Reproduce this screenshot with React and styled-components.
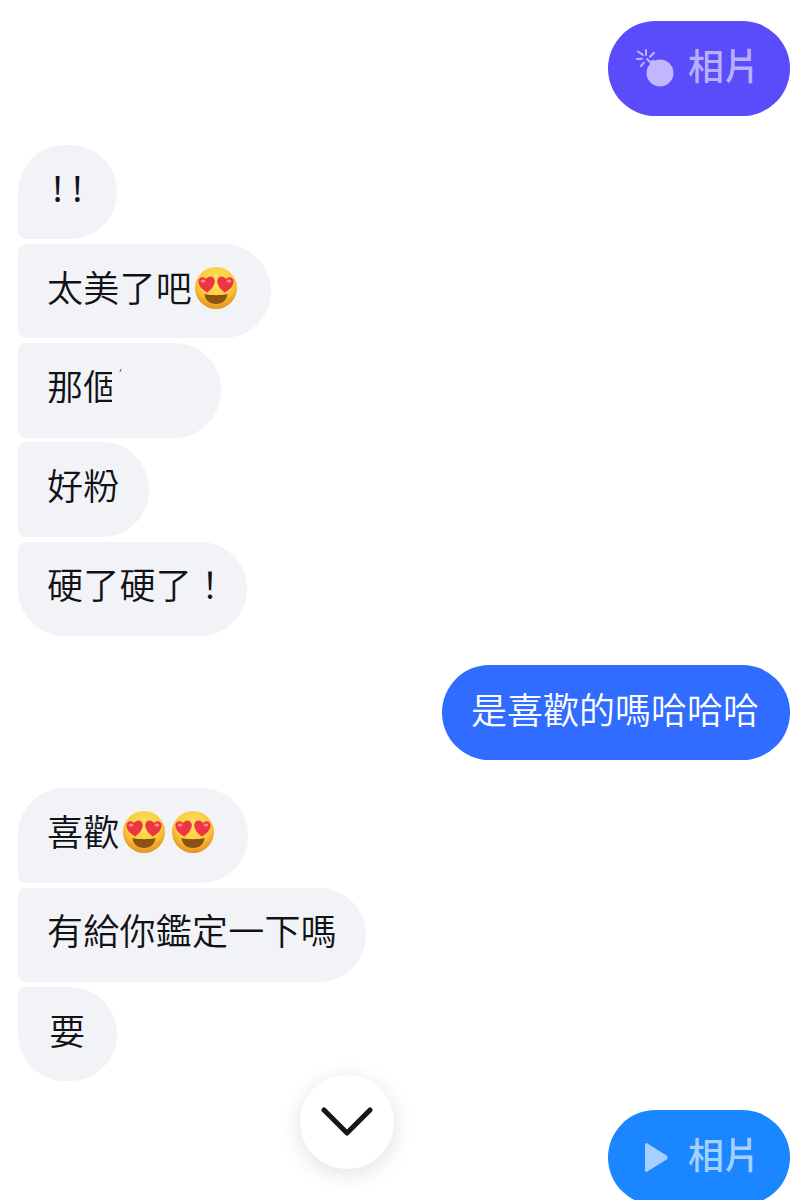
import React from "react";
import styled, { createGlobalStyle } from "styled-components";

const Global = createGlobalStyle`
  html, body { margin: 0; padding: 0; background: #fff; }
  body { font-family: "Noto Sans CJK TC", "Noto Sans", sans-serif; }
`;

const Page = styled.div`
  position: relative;
  width: 808px;
  height: 1200px;
  overflow: hidden;
  box-sizing: border-box;
  padding: 21px 18px 0;
  background: #fff;
  display: flex;
  flex-direction: column;
  gap: 28.6px;
`;

const Group = styled.div`
  flex: none;
  display: flex;
  flex-direction: column;
  align-items: flex-start;
  gap: 4.75px;
`;

const radii = {
  first: "47px 47px 47px 8px",
  middle: "8px 47px 47px 8px",
  last: "8px 47px 47px 47px",
};

const Bubble = styled.div`
  box-sizing: border-box;
  flex: none;
  height: 94.5px;
  min-width: 99px;
  padding: 0 29px 11px;
  display: flex;
  align-items: center;
  justify-content: center;
  background: #f2f3f6;
  color: #111216;
  font-size: 36px;
  font-weight: 350;
  letter-spacing: 0.25px;
  line-height: 1;
  white-space: nowrap;
  border-radius: ${(p) => radii[p.$pos]};
`;

const Outgoing = styled.div`
  box-sizing: border-box;
  align-self: flex-end;
  flex: none;
  height: 95px;
  padding: 0 31px 8px 29px;
  display: flex;
  align-items: center;
  background: #2f6cff;
  color: #fff;
  font-size: 36px;
  font-weight: 350;
  line-height: 1;
  white-space: nowrap;
  border-radius: 47.5px;
`;

const MediaPill = styled.div`
  box-sizing: border-box;
  align-self: flex-end;
  flex: none;
  width: 182px;
  height: 95px;
  padding: 0 0 9px 28px;
  display: flex;
  align-items: center;
  gap: 12px;
  background: ${(p) => p.$bg};
  color: ${(p) => p.$fg};
  font-size: 36px;
  font-weight: 500;
  line-height: 1;
  border-radius: 47.5px;
`;

const PillIcon = styled.svg`
  width: 40px;
  height: 40px;
  flex: none;
  margin-top: 9px;
`;

const EmojiSvg = styled.svg`
  width: 42px;
  height: 42px;
  margin: 4px 4.25px 0 3.25px;
  flex: none;
`;

const Bangs = styled.span`
  font-family: "Noto Sans", sans-serif;
  font-weight: 400;
  letter-spacing: 10px;
  margin: 5px -10px 0 0;
`;

const TightPunct = styled.span`
  margin-right: -10px;
`;

const Smudged = styled.span`
  position: relative;
  display: block;
  width: 145px;
  height: 36px;
  &::after {
    content: "";
    position: absolute;
    left: 73px;
    top: 2px;
    width: 1px;
    height: 3px;
    background: #55565a;
    transform: rotate(25deg);
  }
`;

const ClippedText = styled.span`
  display: block;
  width: 65px;
  overflow: hidden;
  white-space: nowrap;
`;

const JumpButton = styled.button`
  position: absolute;
  left: 300px;
  top: 1075px;
  width: 94px;
  height: 94px;
  padding: 0;
  border: 0;
  border-radius: 50%;
  background: #fff;
  box-shadow: 0 5px 22px rgba(0, 0, 0, 0.12);
  display: flex;
  align-items: center;
  justify-content: center;
`;

let uid = 0;
function Emoji() {
  const id = `face${uid++}`;
  return (
    <EmojiSvg viewBox="0 0 42 42">
      <defs>
        <radialGradient id={id} cx="50%" cy="34%" r="66%">
          <stop offset="0%" stopColor="#ffe566" />
          <stop offset="62%" stopColor="#fbc93c" />
          <stop offset="100%" stopColor="#e3901c" />
        </radialGradient>
      </defs>
      <circle cx="21" cy="21" r="21" fill={`url(#${id})`} />
      <path
        d="M9.5 27 C15 28.6 27 28.6 32.5 27 C32 33 27.5 37 21 37 C14.5 37 10 33 9.5 27 Z"
        fill="#8a5314"
      />
      <path
        d="M12.5 25.5 C8.5 23.5 3.6 19.5 3.4 14.5 C3.3 10.6 8 8.6 11 12 C13.6 7.8 19.4 9 19.8 13.6 C20.2 18 16 23 12.5 25.5 Z"
        fill="#ee3543"
      />
      <path
        d="M29.5 25.5 C33.5 23.5 38.4 19.5 38.6 14.5 C38.7 10.6 34 8.6 31 12 C28.4 7.8 22.6 9 22.2 13.6 C21.8 18 26 23 29.5 25.5 Z"
        fill="#ee3543"
      />
      <ellipse cx="8" cy="14" rx="2.4" ry="1.6" fill="#ff8a90" />
      <ellipse cx="34" cy="14" rx="2.4" ry="1.6" fill="#ff8a90" />
    </EmojiSvg>
  );
}

function BombIcon() {
  return (
    <PillIcon viewBox="0 0 40 40">
      <circle cx="24" cy="24" r="13.5" fill="#c2b7ff" />
      <path d="M14 12.5 L17 10.5 L22 15 L16 19 Z" fill="#c2b7ff" />
      <g stroke="#c2b7ff" strokeWidth="2" strokeLinecap="round">
        <path d="M10 1 L10 6" />
        <path d="M2 2.5 L7 6" />
        <path d="M1 10 L6 9.7" />
        <path d="M5 17 L8 13.7" />
        <path d="M18 3.7 L14 7.7" />
        <path d="M11 10 L15 14" />
      </g>
    </PillIcon>
  );
}

function PlayIcon() {
  return (
    <PillIcon viewBox="0 0 40 40">
      <path
        d="M11 6.2 L31 18.8 Q32.6 20.5 31 22.2 L11 34.8 Q9.2 35.4 9 33.4 L9 7.6 Q9.2 5.6 11 6.2 Z"
        fill="#a6d0ff"
      />
    </PillIcon>
  );
}

export default function App() {
  uid = 0;
  return (
    <Page>
      <Global />
      <MediaPill $bg="#5a4bfb" $fg="#baaeff">
        <BombIcon />
        相片
      </MediaPill>

      <Group>
        <Bubble $pos="first"><Bangs>!!</Bangs></Bubble>
        <Bubble $pos="middle">太美了吧<Emoji /></Bubble>
        <Bubble $pos="middle">
          <Smudged><ClippedText>那個</ClippedText></Smudged>
        </Bubble>
        <Bubble $pos="middle">好粉</Bubble>
        <Bubble $pos="last">硬了硬了<TightPunct>！</TightPunct></Bubble>
      </Group>

      <Outgoing>是喜歡的嗎哈哈哈</Outgoing>

      <Group>
        <Bubble $pos="first">喜歡<Emoji /><Emoji /></Bubble>
        <Bubble $pos="middle">有給你鑑定一下嗎</Bubble>
        <Bubble $pos="last">要</Bubble>
      </Group>

      <MediaPill $bg="#1a86ff" $fg="#a6d0ff">
        <PlayIcon />
        相片
      </MediaPill>

      <JumpButton aria-label="scroll down">
        <svg width="52" height="34" viewBox="0 0 52 34" fill="none">
          <path d="M3 5 L26 28 L49 5" stroke="#15161a" strokeWidth="5" strokeLinecap="round" strokeLinejoin="round" />
        </svg>
      </JumpButton>
    </Page>
  );
}
